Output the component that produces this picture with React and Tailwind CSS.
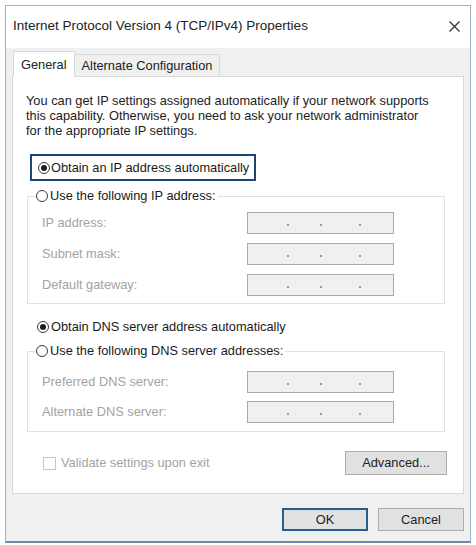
import React from "react";

const font = { fontFamily: '"Liberation Sans", Arial, sans-serif' };

function Radio({ checked }) {
  return (
    <span className="w-[12px] h-[12px] rounded-full border border-[#3a3a3a] bg-white flex items-center justify-center shrink-0">
      {checked && <span className="w-[6px] h-[6px] rounded-full bg-[#1e1e1e]" />}
    </span>
  );
}

function Field() {
  return (
    <div className="w-[147px] h-[22px] border border-[#a9a9a9] bg-[#f0f0f0] flex items-center pt-[3px]">
      <span className="w-[2px] h-[2px] bg-[#9a9a9a] ml-[39px]" />
      <span className="w-[2px] h-[2px] bg-[#9a9a9a] ml-[31px]" />
      <span className="w-[2px] h-[2px] bg-[#9a9a9a] ml-[37px]" />
    </div>
  );
}

function Row({ label }) {
  return (
    <div className="flex items-center h-[22px]">
      <span className="w-[219px] pl-[14px] text-[#a3a3a3]">{label}</span>
      <Field />
    </div>
  );
}

export default function App() {
  return (
    <div className="w-[476px] h-[545px] bg-white pt-[5px] pl-[5px] text-[12.8px] text-[#1a1a1a]" style={font}>
      <div className="w-[466px] h-[538px] border border-[#9db1c7] border-b-[#6f8aa8] border-b-2 flex flex-col bg-[#f0f0f0]">
        {/* Title bar */}
        <div className="h-[42px] bg-white flex items-center justify-between pl-[7px] pr-[10px] shrink-0">
          <span className="text-[13.5px] text-[#222] pb-[2px]">Internet Protocol Version 4 (TCP/IPv4) Properties</span>
          <svg width="11" height="11" viewBox="0 0 11 11" className="mb-[1px]">
            <path d="M0.5 0.5 L10.5 10.5 M10.5 0.5 L0.5 10.5" stroke="#333" strokeWidth="1.3" fill="none" />
          </svg>
        </div>

        {/* Body */}
        <div className="flex-1 flex flex-col px-[6px]">
          {/* Tabs */}
          <div className="flex items-end h-[28px] pl-[1px]">
            <div className="h-[26px] px-[7px] bg-white border border-[#d9d9d9] border-b-0 flex items-center relative top-[1px] text-[#222]">
              General
            </div>
            <div className="h-[22px] px-[7px] bg-[#f0f0f0] border border-[#d9d9d9] border-b-0 border-l-0 flex items-center text-[#222]">
              Alternate Configuration
            </div>
          </div>

          {/* Panel */}
          <div className="h-[418px] bg-white border border-[#d9d9d9] flex flex-col pt-[16px]">
            <p className="pl-[13px] leading-[15px] text-[#222] whitespace-nowrap">
              You can get IP settings assigned automatically if your network supports
              <br />
              this capability. Otherwise, you need to ask your network administrator
              <br />
              for the appropriate IP settings.
            </p>

            <div className="mt-[16px] ml-[17px] w-[226px] h-[27px] border-2 border-[#1c4570] flex items-center gap-[1px] pl-[6px]">
              <Radio checked />
              <span>Obtain an IP address automatically</span>
            </div>

            <fieldset className="mt-[7px] ml-[14px] w-[418px] h-[116px] border border-[#e1e1e1] flex flex-col">
              <legend className="ml-[8px] flex items-center gap-[2px] pr-[2px] h-[16px]">
                <Radio />
                <span>Use the following IP address:</span>
              </legend>
              <div className="flex flex-col gap-[9px] mt-[8px]">
                <Row label="IP address:" />
                <Row label="Subnet mask:" />
                <Row label="Default gateway:" />
              </div>
            </fieldset>

            <div className="mt-[15px] ml-[24px] flex items-center gap-[2px] h-[16px]">
              <Radio checked />
              <span>Obtain DNS server address automatically</span>
            </div>

            <fieldset className="mt-[8px] ml-[14px] w-[418px] h-[89px] border border-[#e1e1e1] flex flex-col">
              <legend className="ml-[8px] flex items-center gap-[2px] pr-[2px] h-[16px]">
                <Radio />
                <span>Use the following DNS server addresses:</span>
              </legend>
              <div className="flex flex-col gap-[8px] mt-[12px]">
                <Row label="Preferred DNS server:" />
                <Row label="Alternate DNS server:" />
              </div>
            </fieldset>

            <div className="mt-[19px] flex items-center justify-between pl-[30px] pr-[16px]">
              <div className="flex items-center gap-[5px]">
                <span className="w-[13px] h-[13px] border border-[#c6c6c6] bg-white" />
                <span className="text-[#a3a3a3]">Validate settings upon exit</span>
              </div>
              <div className="w-[102px] h-[24px] bg-[#e1e1e1] border border-[#adadad] flex items-center justify-center text-[#222]">
                Advanced...
              </div>
            </div>
          </div>

          {/* Buttons */}
          <div className="flex justify-end gap-[10px] mt-[14px]">
            <div className="w-[86px] h-[23px] bg-[#e1e1e1] border-2 border-[#2a5d8f] flex items-center justify-center text-[#222]">
              OK
            </div>
            <div className="w-[86px] h-[23px] bg-[#e1e1e1] border border-[#adadad] flex items-center justify-center text-[#222]">
              Cancel
            </div>
          </div>
        </div>
      </div>
    </div>
  );
}
